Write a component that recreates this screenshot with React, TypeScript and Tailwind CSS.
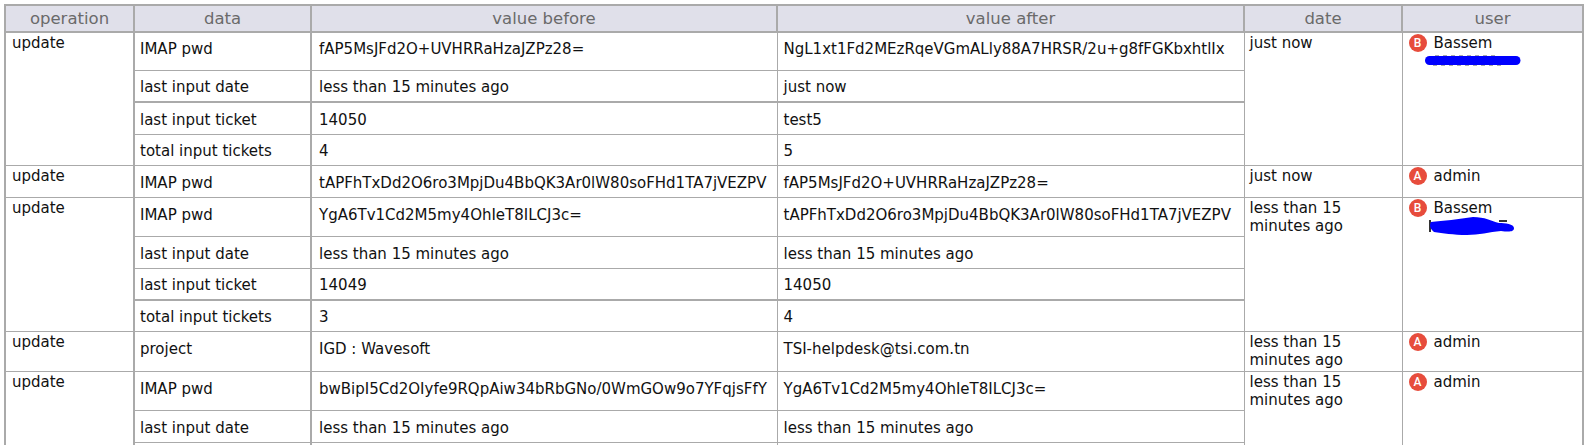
import React from 'react';

type Row = { data: string; before: string; after: string; thick?: boolean; height: string; pad: string };
type Entry = { date: string; user: string; letter: string; scribble?: 'a' | 'b'; rows: Row[] };

// tall rows keep their text a little above the middle, short ones a little below
const tall = 'pb-[4px]';
const short = 'pt-[3px]';

const entries: Entry[] = [
  {
    date: 'just now',
    user: 'Bassem',
    letter: 'B',
    scribble: 'a',
    rows: [
      { data: 'IMAP pwd', before: 'fAP5MsJFd2O+UVHRRaHzaJZPz28=', after: 'NgL1xt1Fd2MEzRqeVGmALly88A7HRSR/2u+g8fFGKbxhtlIx', height: 'h-[38px]', pad: tall },
      { data: 'last input date', before: 'less than 15 minutes ago', after: 'just now', thick: true, height: 'h-[32px]', pad: short },
      { data: 'last input ticket', before: '14050', after: 'test5', height: 'h-[32px]', pad: short },
      { data: 'total input tickets', before: '4', after: '5', height: 'h-[31px]', pad: short },
    ],
  },
  {
    date: 'just now',
    user: 'admin',
    letter: 'A',
    rows: [{ data: 'IMAP pwd', before: 'tAPFhTxDd2O6ro3MpjDu4BbQK3Ar0lW80soFHd1TA7jVEZPV', after: 'fAP5MsJFd2O+UVHRRaHzaJZPz28=', height: 'h-[32px]', pad: short }],
  },
  {
    date: 'less than 15 minutes ago',
    user: 'Bassem',
    letter: 'B',
    scribble: 'b',
    rows: [
      { data: 'IMAP pwd', before: 'YgA6Tv1Cd2M5my4OhIeT8ILCJ3c=', after: 'tAPFhTxDd2O6ro3MpjDu4BbQK3Ar0lW80soFHd1TA7jVEZPV', height: 'h-[39px]', pad: tall },
      { data: 'last input date', before: 'less than 15 minutes ago', after: 'less than 15 minutes ago', height: 'h-[32px]', pad: short },
      { data: 'last input ticket', before: '14049', after: '14050', thick: true, height: 'h-[32px]', pad: short },
      { data: 'total input tickets', before: '3', after: '4', height: 'h-[31px]', pad: short },
    ],
  },
  {
    date: 'less than 15 minutes ago',
    user: 'admin',
    letter: 'A',
    rows: [{ data: 'project', before: 'IGD : Wavesoft', after: 'TSI-helpdesk@tsi.com.tn', height: 'h-[40px]', pad: tall }],
  },
  {
    date: 'less than 15 minutes ago',
    user: 'admin',
    letter: 'A',
    rows: [
      { data: 'IMAP pwd', before: 'bwBipI5Cd2OIyfe9RQpAiw34bRbGNo/0WmGOw9o7YFqjsFfY', after: 'YgA6Tv1Cd2M5my4OhIeT8ILCJ3c=', height: 'h-[39px]', pad: tall },
      { data: 'last input date', before: 'less than 15 minutes ago', after: 'less than 15 minutes ago', height: 'h-[32px]', pad: short },
      // the next row starts at the very bottom of the page, nothing of it but its lines shows
      { data: '', before: '', after: '', height: 'h-[32px]', pad: short },
    ],
  },
];

const headers = ['operation', 'data', 'value before', 'value after', 'date', 'user'];

// redaction marks over the surname
const Scribble = ({ kind }: { kind: 'a' | 'b' }) =>
  kind === 'a' ? (
    <svg className="absolute left-[16px] top-[21px]" width="96" height="11" viewBox="0 0 96 11">
      <path d="M10 1H72M8 10H78" stroke="#555555" strokeWidth="1" strokeDasharray="4 4" />
      <path d="M4.500 5.500H91" stroke="#0000ff" strokeWidth="9" strokeLinecap="round" />
    </svg>
  ) : (
    <svg className="absolute left-[20px] top-[18px]" width="86" height="18" viewBox="0 0 86 18">
      <path d="M1 3V15M70 4H78" stroke="#333333" strokeWidth="2" />
      <path d="M2 5C14 4 30 2 44 0 56 0 62 4 70 6 76 6 85 7 85 11 85 15 80 15 72 14 60 15 50 18 38 18 24 18 14 16 5 15 1 12 0 8 2 5Z" fill="#0000ff" />
    </svg>
  );

const cell = 'border border-[#aaaaaa] align-middle whitespace-nowrap overflow-hidden';

export default function App() {
  return (
    <div className="h-[445px] w-[1588px] overflow-hidden bg-white pl-[4px] pt-[4px] font-['DejaVu_Sans',sans-serif] text-[15px] leading-[18px] text-[#111111]">
      <table className="w-[1580px] table-fixed border-collapse border-2 border-[#aaaaaa]">
        <colgroup>
          <col className="w-[129px]" />
          <col className="w-[177px]" />
          <col className="w-[466px]" />
          <col className="w-[467px]" />
          <col className="w-[158px]" />
          <col />
        </colgroup>
        <thead>
          <tr className="h-[27px] bg-[#e0e0ea]">
            {headers.map((h) => (
              <th key={h} className="border-2 border-[#aaaaaa] text-center text-[16.500px] font-normal text-[#6a6a6a]">
                {h}
              </th>
            ))}
          </tr>
        </thead>
        <tbody>
          {entries.map((entry, i) =>
            entry.rows.map((row, j) => (
              <tr key={`${i}-${j}`} className={row.height}>
                {j === 0 && (
                  <td rowSpan={entry.rows.length} className="border border-r-2 border-[#aaaaaa] px-[6px] pt-[1px] align-top">
                    update
                  </td>
                )}
                <td className={`${cell} ${row.pad} border-r-2 px-[5px] ${row.thick ? 'border-b-2' : ''}`}>{row.data}</td>
                <td className={`${cell} ${row.pad} px-[7px] ${row.thick ? 'border-b-2' : ''}`}>{row.before}</td>
                <td className={`${cell} ${row.pad} px-[6px] ${row.thick ? 'border-b-2' : ''}`}>{row.after}</td>
                {j === 0 && (
                  <td rowSpan={entry.rows.length} className="border border-[#aaaaaa] px-[5px] pt-[1px] align-top">
                    {entry.date}
                  </td>
                )}
                {j === 0 && (
                  <td rowSpan={entry.rows.length} className="border border-[#aaaaaa] px-[6px] pt-[1px] align-top">
                    <div className="relative flex items-center gap-[7px]">
                      <span className="flex h-[18px] w-[18px] items-center justify-center rounded-full bg-[#e74c3c] font-['Roboto',sans-serif] text-[12px] font-medium text-white">
                        {entry.letter}
                      </span>
                      {entry.user}
                      {entry.scribble && <Scribble kind={entry.scribble} />}
                    </div>
                  </td>
                )}
              </tr>
            )),
          )}
        </tbody>
      </table>
    </div>
  );
}
